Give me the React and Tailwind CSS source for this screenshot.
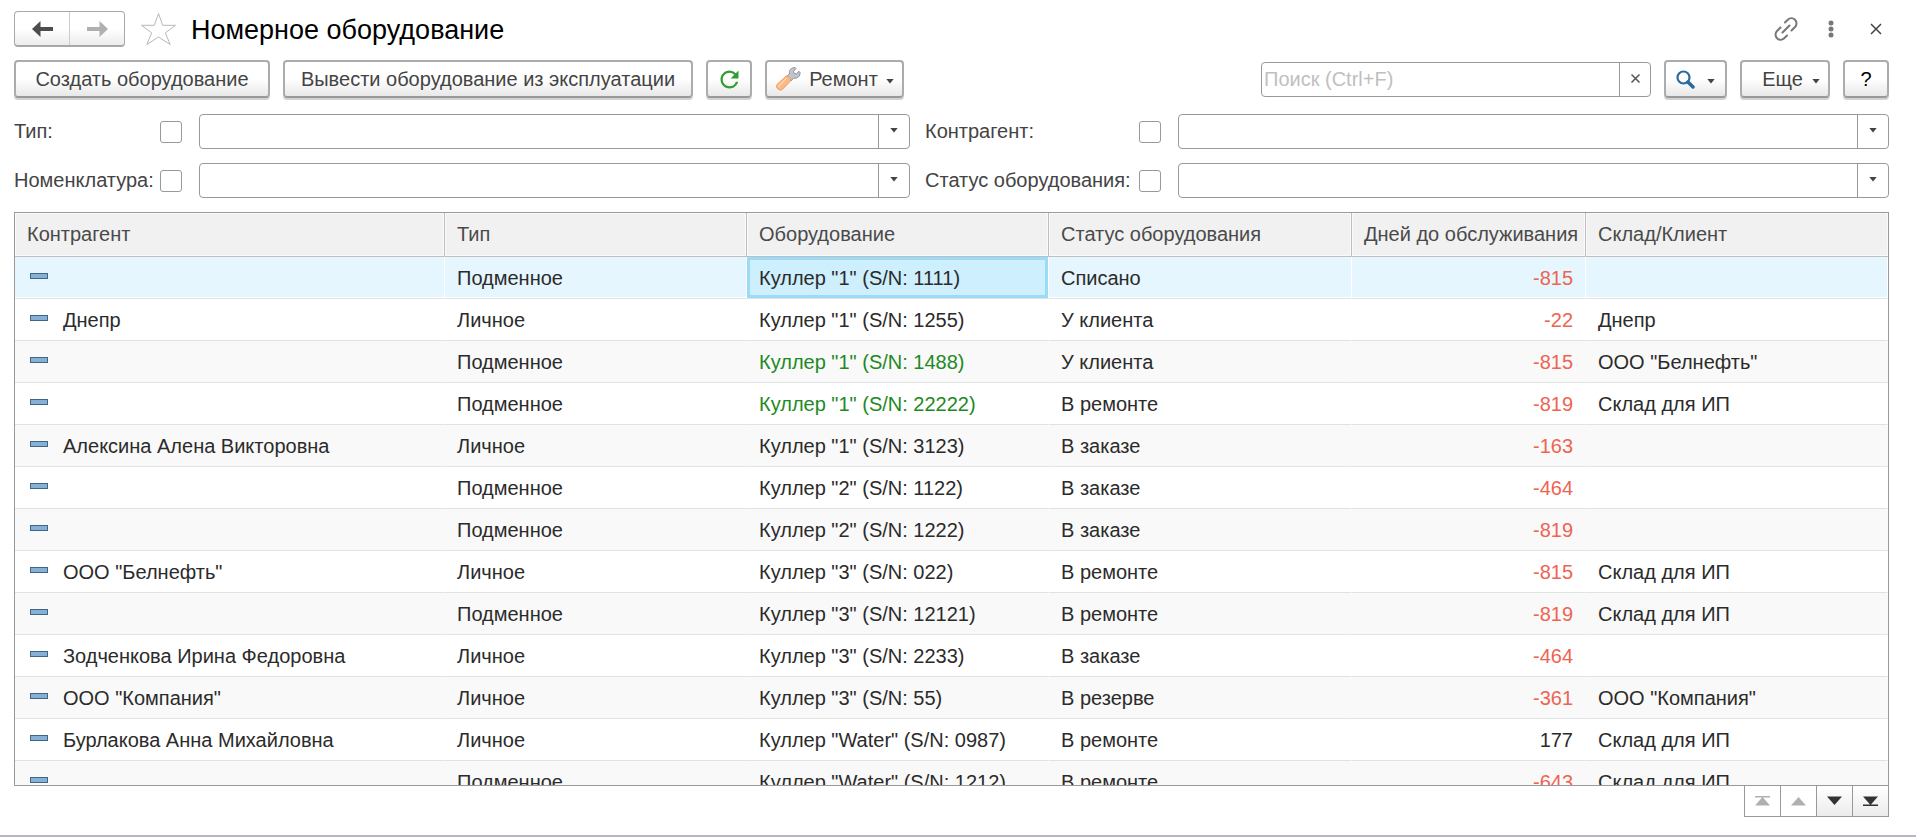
import React from "react";
import { MdRefresh } from "react-icons/md";

const rows = [
  ["", "Подменное", 'Куллер "1" (S/N: 1111)', "Списано", -815, ""],
  ["Днепр", "Личное", 'Куллер "1" (S/N: 1255)', "У клиента", -22, "Днепр"],
  ["", "Подменное", 'Куллер "1" (S/N: 1488)', "У клиента", -815, 'ООО "Белнефть"', true],
  ["", "Подменное", 'Куллер "1" (S/N: 22222)', "В ремонте", -819, "Склад для ИП", true],
  ["Алексина Алена Викторовна", "Личное", 'Куллер "1" (S/N: 3123)', "В заказе", -163, ""],
  ["", "Подменное", 'Куллер "2" (S/N: 1122)', "В заказе", -464, ""],
  ["", "Подменное", 'Куллер "2" (S/N: 1222)', "В заказе", -819, ""],
  ['ООО "Белнефть"', "Личное", 'Куллер "3" (S/N: 022)', "В ремонте", -815, "Склад для ИП"],
  ["", "Подменное", 'Куллер "3" (S/N: 12121)', "В ремонте", -819, "Склад для ИП"],
  ["Зодченкова Ирина Федоровна", "Личное", 'Куллер "3" (S/N: 2233)', "В заказе", -464, ""],
  ['ООО "Компания"', "Личное", 'Куллер "3" (S/N: 55)', "В резерве", -361, 'ООО "Компания"'],
  ["Бурлакова Анна Михайловна", "Личное", 'Куллер "Water" (S/N: 0987)', "В ремонте", 177, "Склад для ИП"],
  ["", "Подменное", 'Куллер "Water" (S/N: 1212)', "В ремонте", -643, "Склад для ИП"],
];

const headers = ["Контрагент", "Тип", "Оборудование", "Статус оборудования", "Дней до обслуживания", "Склад/Клиент"];

function Caret({ className = "" }) {
  return (
    <svg width="8" height="5" viewBox="0 0 8 5" className={`shrink-0 ${className}`} aria-hidden="true">
      <path d="M.3 0h7.400L4 4.600z" fill="#444" />
    </svg>
  );
}

function ToolButton({ className = "", children, ...rest }) {
  return (
    <button
      type="button"
      className={`flex h-[38px] shrink-0 items-center justify-center rounded-[4px] border-2 border-[#acacac] border-b-[#999] bg-linear-to-b from-white from-50% to-[#e8e8e8] whitespace-nowrap text-[#444] shadow-[0_2px_0_#d2d2d2] ${className}`}
      {...rest}
    >
      {children}
    </button>
  );
}

function Filter({ id, label, className = "" }) {
  return (
    <>
      <label htmlFor={id} className={`pb-[2px] whitespace-nowrap text-[#444] ${className}`}>{label}</label>
      <input
        type="checkbox"
        aria-label={`Отбор: ${label}`}
        className="size-[22px] appearance-none rounded-[3px] border border-[#999] bg-white"
      />
      <div className="ml-[17px] flex h-[35px] rounded-[4px] border border-[#999] bg-white">
        <input id={id} type="text" className="min-w-0 flex-1 rounded-l-[4px] px-2 outline-none" />
        <button type="button" aria-label="Выбрать" className="flex w-[31px] items-center justify-center border-l border-[#999] pb-[2px]">
          <Caret />
        </button>
      </div>
    </>
  );
}

function WrenchIcon() {
  return (
    <svg width="26" height="26" viewBox="0 0 26 26" aria-hidden="true">
      <path
        d="M11.500 10.500l3-2.500c-.8-3.500 1.500-6.500 5.500-6.500l1 1-2.500 3 .6 2 2.200.4 2.700-2.600 1 1c.4 4-2.800 6.600-6.200 5.700l-3 3z"
        fill="#c2c6ca"
        stroke="#8d9195"
        strokeLinejoin="round"
      />
      <path
        d="M11 10.200c1.800-.8 5.300 2.300 4.600 4.600L7.400 23.400c-2.600 2.200-7.200-1.600-5.400-4.800z"
        fill="#fab987"
        stroke="#ee9a60"
        strokeLinejoin="round"
      />
      <path d="M11 12.500l-7.500 8" stroke="#fdd3b0" strokeWidth="1.500" strokeLinecap="round" />
    </svg>
  );
}

export default function App() {
  return (
    <div className="flex h-screen flex-col border-b-2 border-[#b4b8c2] bg-white pt-[11px] pr-[27px] pl-[14px] font-['Liberation_Sans',Arial,sans-serif] text-[20px] leading-[24px] text-[#2b2b2b]">
      <header className="flex h-9 shrink-0 items-center">
        <div className="flex h-9 w-[111px] rounded-[4px] border border-[#a8a8a8] border-b-2 bg-linear-to-b from-white from-50% to-[#ececec]">
          <button type="button" aria-label="Назад" className="flex flex-1 items-center justify-center border-r border-[#ccc]">
            <svg width="21" height="16" viewBox="0 0 21 16" aria-hidden="true">
              <path d="M0 8l8.500-8v6H21v4H8.500v6z" fill="#4d4d4d" />
            </svg>
          </button>
          <button type="button" aria-label="Вперед" className="flex flex-1 items-center justify-center">
            <svg width="21" height="16" viewBox="0 0 21 16" aria-hidden="true">
              <path d="M21 8l-8.500-8v6H0v4h12.500v6z" fill="#b0b0b0" />
            </svg>
          </button>
        </div>
        <button type="button" aria-label="В избранное" className="ml-[15px]">
          <svg width="36" height="34" viewBox="0 0 36 34" aria-hidden="true">
            <path d="M18.500 1.500l4.200 11.800h12.800l-10.200 7.600 4.900 11.600-11.700-7.500L6.800 32.500l4.900-11.600L1.500 13.300h12.800z" fill="#fff" stroke="#b4b8bc" />
          </svg>
        </button>
        <h1 className="ml-[15px] pt-[2px] text-[27px] leading-[34px] text-black">Номерное оборудование</h1>
        <div className="ml-auto flex items-center text-[#777]">
          <button type="button" aria-label="Ссылка">
            <svg width="24" height="24" viewBox="0 0 24 24" fill="none" stroke="#777" strokeWidth="2" strokeLinecap="round" aria-hidden="true">
              <path d="M8.500 15.500l7-7M11 5.500l2.800-2.700a4.900 4.900 0 0 1 7.200 7.200L17.500 13.500M13 18.500l-2.800 2.700a4.900 4.900 0 0 1-7.200-7.200L6.500 10.500" />
            </svg>
          </button>
          <button type="button" aria-label="Меню" className="ml-[30px]">
            <svg width="6" height="18" viewBox="0 0 6 18" fill="#777" aria-hidden="true">
              <circle cx="3" cy="3" r="2.500" />
              <circle cx="3" cy="9" r="2.500" />
              <circle cx="3" cy="15" r="2.500" />
            </svg>
          </button>
          <button type="button" aria-label="Закрыть" className="mr-[7px] ml-[36px]">
            <svg width="12" height="12" viewBox="0 0 12 12" stroke="#444" strokeWidth="1.500" aria-hidden="true">
              <path d="M1 1l10 10M11 1L1 11" />
            </svg>
          </button>
        </div>
      </header>

      <div className="mt-[13px] flex shrink-0 items-center gap-[13px]">
        <ToolButton className="w-[256px]">Создать оборудование</ToolButton>
        <ToolButton className="w-[410px]">Вывести оборудование из эксплуатации</ToolButton>
        <ToolButton className="w-[46px]" aria-label="Обновить">
          <MdRefresh size={27} color="#2f9e34" />
        </ToolButton>
        <ToolButton className="w-[139px] gap-[8px]">
          <WrenchIcon />
          Ремонт
          <Caret className="mt-1" />
        </ToolButton>
        <div className="ml-auto flex h-[35px] w-[390px] rounded-[4px] border border-[#999] bg-white">
          <input type="text" aria-label="Поиск" placeholder="Поиск (Ctrl+F)" className="min-w-0 flex-1 rounded-l-[4px] px-[2px] outline-none placeholder:text-[#c0c0c0]" />
          <button type="button" aria-label="Очистить" className="flex w-[31px] items-center justify-center border-l border-[#999] pb-[2px]">
            <svg width="9" height="9" viewBox="0 0 9 9" stroke="#555" strokeWidth="1.500" aria-hidden="true">
              <path d="M.5.5l8 8M8.500.5l-8 8" />
            </svg>
          </button>
        </div>
        <ToolButton className="w-[63px] gap-3" aria-label="Найти">
          <svg width="19" height="19" viewBox="0 0 19 19" fill="none" stroke="#2a6a9e" aria-hidden="true">
            <circle cx="7.500" cy="7.500" r="6" strokeWidth="2.200" />
            <path d="M12 12l5 5" strokeWidth="3.500" strokeLinecap="round" />
          </svg>
          <Caret className="mt-1" />
        </ToolButton>
        <ToolButton className="w-[90px] gap-[9px] pl-3">
          Еще
          <Caret className="mt-1" />
        </ToolButton>
        <ToolButton className="w-[46px]" aria-label="Справка">
          <span className="text-black">?</span>
        </ToolButton>
      </div>

      <div className="mt-4 grid shrink-0 grid-cols-[146px_22px_minmax(0,1fr)_229px_22px_minmax(0,1fr)] items-center gap-y-[14px]">
        <Filter id="type" label="Тип:" />
        <Filter id="partner" label="Контрагент:" className="pl-[15px]" />
        <Filter id="item" label="Номенклатура:" />
        <Filter id="status" label="Статус оборудования:" className="pl-[15px]" />
      </div>

      <main className="mt-[14px] min-h-0 flex-1 overflow-hidden border border-[#999]">
        <table className="w-full table-fixed border-separate border-spacing-0">
          <colgroup>
            <col className="w-[430px]" />
            <col className="w-[302px]" />
            <col className="w-[302px]" />
            <col className="w-[303px]" />
            <col className="w-[234px]" />
            <col />
          </colgroup>
          <thead>
            <tr>
              {headers.map((h, i) => (
                <th
                  key={h}
                  className={`h-[44px] border-b border-[#bfbfbf] bg-[#f1f1f1] px-3 pb-[2px] font-normal whitespace-nowrap text-[#4a4a4a] shadow-[inset_0_0_0_1px_#fafafa] ${i < 5 ? "border-r" : ""} ${i === 4 ? "text-right" : "text-left"}`}
                >
                  {h}
                </th>
              ))}
            </tr>
          </thead>
          <tbody>
            {rows.map(([partner, type, item, status, days, place, green], i) => {
              const line = i === 0
                ? "h-[42px] border-b border-b-[#e2e2e2] border-r border-r-white bg-[#e5f6fe] px-3 shadow-[inset_0_-1px_0_#fff]"
                : `h-[42px] border-b border-b-[#e2e2e2] px-3 ${i % 2 ? "border-r border-r-white bg-white" : "border-r border-r-[#f9f9f9] bg-[#f9f9f9]"}`;
              return (
                <tr key={item} className="whitespace-nowrap">
                  <td className={line}>
                    <div className="flex items-center gap-[15px] pl-[3px]">
                      <span className="mb-1 h-[6px] w-[18px] border border-[#3f6785] bg-[#86b0d6]" />
                      {partner}
                    </div>
                  </td>
                  <td className={line}>{type}</td>
                  <td
                    className={
                      i === 0
                        ? "h-[42px] border-r border-b border-r-white border-b-[#e2e2e2] bg-[#cdeffe] px-3 shadow-[inset_0_0_0_3px_#9cdbf8]"
                        : `${line} ${green ? "text-[#1e8a24]" : ""}`
                    }
                  >
                    {item}
                  </td>
                  <td className={line}>{status}</td>
                  <td className={`${line} text-right ${days < 0 ? "text-[#ee6352]" : ""}`}>{days}</td>
                  <td className={line}>{place}</td>
                </tr>
              );
            })}
          </tbody>
        </table>
      </main>

      <nav aria-label="Прокрутка списка" className="mb-[18px] flex h-[31px] shrink-0 justify-end">
        <div className="flex divide-x divide-[#999] border border-t-0 border-[#999]">
          <button type="button" disabled aria-label="В начало" className="flex w-9 items-center justify-center">
            <svg width="15" height="10" viewBox="0 0 15 10" fill="#b0b0b0" aria-hidden="true"><path d="M0 0h15v1.500H0zM7.500 1L15 9.500H0z" /></svg>
          </button>
          <button type="button" disabled aria-label="Вверх" className="flex w-9 items-center justify-center">
            <svg width="15" height="10" viewBox="0 0 15 10" fill="#b0b0b0" aria-hidden="true"><path d="M7.500 1L15 9.500H0z" /></svg>
          </button>
          <button type="button" aria-label="Вниз" className="flex w-9 items-center justify-center bg-linear-to-b from-white to-[#ececec]">
            <svg width="15" height="10" viewBox="0 0 15 10" fill="#333" aria-hidden="true"><path d="M0 .5h15L7.500 9z" /></svg>
          </button>
          <button type="button" aria-label="В конец" className="flex w-[35px] items-center justify-center bg-linear-to-b from-white to-[#ececec]">
            <svg width="15" height="10" viewBox="0 0 15 10" fill="#333" aria-hidden="true"><path d="M0 .5h15L7.500 9zM0 8.500h15V10H0z" /></svg>
          </button>
        </div>
      </nav>
    </div>
  );
}
